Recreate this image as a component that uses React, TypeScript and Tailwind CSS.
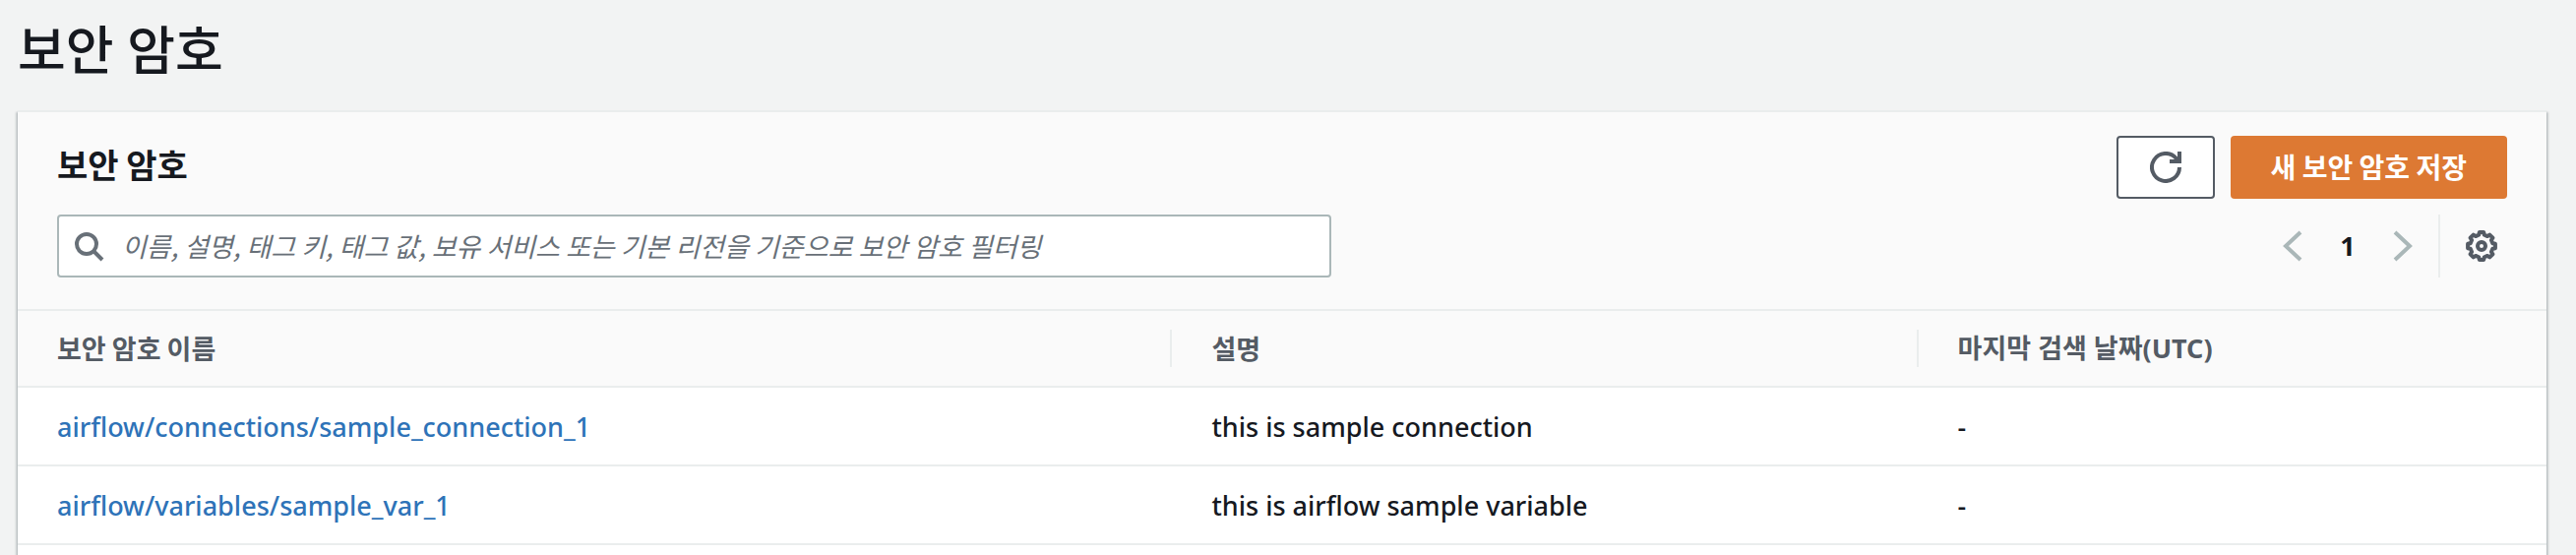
import type { ReactNode } from "react";

const secrets = [
  { name: "airflow/connections/sample_connection_1", description: "this is sample connection", retrieved: "-" },
  { name: "airflow/variables/sample_var_1", description: "this is airflow sample variable", retrieved: "-" },
];

/* Outline of an eight-toothed cog centred on (16, 16). */
function cogPoints() {
  const points: string[] = [];
  for (let tooth = 0; tooth < 8; tooth += 1) {
    const corners = [
      [-9, 14.1],
      [9, 14.1],
      [14, 11.6],
      [31, 11.6],
    ];
    for (const [offset, radius] of corners) {
      const angle = ((tooth * 45 + offset - 90) * Math.PI) / 180;
      points.push(`${(16 + radius * Math.cos(angle)).toFixed(2)},${(16 + radius * Math.sin(angle)).toFixed(2)}`);
    }
  }
  return points.join(" ");
}

function SearchIcon() {
  return (
    <svg viewBox="0 0 32 32" className="size-8" fill="none" stroke="currentColor" strokeWidth="4" aria-hidden="true">
      <circle cx="12" cy="14" r="10" />
      <path d="M19 21l9 9" />
    </svg>
  );
}

function RefreshIcon() {
  return (
    <svg viewBox="0 0 32 32" className="size-8" fill="none" stroke="currentColor" strokeWidth="4" aria-hidden="true">
      <path d="M30 16a14 14 0 1 1-3.500-9.300L29.500 10" />
      <path d="M30 0v10H20" />
    </svg>
  );
}

function ChevronIcon({ points }: { points: string }) {
  return (
    <svg viewBox="0 0 32 32" className="size-8" fill="none" stroke="currentColor" strokeWidth="4" aria-hidden="true">
      <polyline points={points} />
    </svg>
  );
}

function GearIcon() {
  return (
    <svg viewBox="0 0 32 32" className="size-8" fill="none" stroke="currentColor" strokeWidth="4" aria-hidden="true">
      <polygon points={cogPoints()} strokeLinejoin="round" />
      <circle cx="16" cy="16" r="4" />
    </svg>
  );
}

function HeaderCell({ children, className, divider = true }: { children: ReactNode; className: string; divider?: boolean }) {
  return (
    <th scope="col" className={`py-[19px] pl-10 text-left font-bold ${className}`}>
      <div className={`flex h-[38px] items-center border-[#eaeded] ${divider ? "border-r-2" : ""}`}>{children}</div>
    </th>
  );
}

export default function App() {
  return (
    <main className="flex min-h-screen flex-col bg-[#f2f3f3] pr-[30px] pl-[18px] font-['Noto_Sans','Noto_Sans_CJK_KR',sans-serif] text-[27px] font-medium text-[#16191f]">
      <h1 className="pt-[15px] pb-[25px] text-[53px] leading-[72px]">보안 암호</h1>
      <section className="flex-1 bg-white shadow-[0_2px_2px_0_rgba(0,28,36,0.3),2px_2px_2px_0_rgba(0,28,36,0.15),-2px_2px_2px_0_rgba(0,28,36,0.15)]">
        <div className="border-t-2 border-b-2 border-[#eaeded] bg-[#fafafa] px-10 pt-6 pb-8">
          <div className="flex items-start justify-between">
            <h2 className="font-['Noto_Sans_CJK_KR',sans-serif] text-[34px] leading-[58px] font-bold">보안 암호</h2>
            <div className="flex gap-4">
              <button type="button" aria-label="새로 고침" className="flex h-16 w-[100px] items-center justify-center rounded-sm border-2 border-[#545b64] bg-white text-[#545b64]">
                <RefreshIcon />
              </button>
              <button type="button" className="h-16 rounded-sm bg-[#dd7933] px-[41px] pb-0.5 font-['Noto_Sans_CJK_KR',sans-serif] text-[28px] leading-[60px] font-bold text-white">
                새 보안 암호 저장
              </button>
            </div>
          </div>
          <div className="mt-4 flex items-center justify-between">
            <label className="flex h-16 w-[52%] items-center gap-4 rounded-sm border-2 border-[#aab7b8] bg-white px-4 text-[#687078]">
              <SearchIcon />
              <input
                type="search"
                aria-label="보안 암호 필터링"
                placeholder="이름, 설명, 태그 키, 태그 값, 보유 서비스 또는 기본 리전을 기준으로 보안 암호 필터링"
                className="min-w-0 flex-1 bg-transparent font-['Noto_Sans_CJK_KR',sans-serif] font-normal outline-none placeholder:text-[#687078] placeholder:italic"
              />
            </label>
            <div className="flex items-center">
              <button type="button" aria-label="이전 페이지" className="text-[#aab7b8]">
                <ChevronIcon points="24,2 9,16 24,30" />
              </button>
              <button type="button" aria-current="page" className="w-20 text-center font-bold">
                1
              </button>
              <button type="button" aria-label="다음 페이지" className="text-[#aab7b8]">
                <ChevronIcon points="8,2 23,16 8,30" />
              </button>
              <div className="ml-5 flex h-16 items-center border-l-2 border-[#eaeded] pr-[10px] pl-[26px]">
                <button type="button" aria-label="환경설정" className="text-[#545b64]">
                  <GearIcon />
                </button>
              </div>
            </div>
          </div>
        </div>
        <table className="w-full table-fixed border-collapse">
          <thead className="bg-[#fafafa] font-['Noto_Sans_CJK_KR',sans-serif] text-[#545b64]">
            <tr className="border-b-2 border-[#eaeded]">
              <HeaderCell className="w-[45.66%]">보안 암호 이름</HeaderCell>
              <HeaderCell className="w-[29.5%]">설명</HeaderCell>
              <HeaderCell className="w-[24.84%] font-['Noto_Sans','Noto_Sans_CJK_KR',sans-serif]" divider={false}>
                마지막 검색 날짜(UTC)
              </HeaderCell>
            </tr>
          </thead>
          <tbody>
            {secrets.map((secret) => (
              <tr key={secret.name} className="h-20 border-b-2 border-[#eaeded]">
                <td className="pt-0.5 pl-10">
                  <a href="#" className="text-[#2e73b8]">{secret.name}</a>
                </td>
                <td className="pt-0.5 pl-10">{secret.description}</td>
                <td className="pt-0.5 pl-10">{secret.retrieved}</td>
              </tr>
            ))}
          </tbody>
        </table>
      </section>
    </main>
  );
}
